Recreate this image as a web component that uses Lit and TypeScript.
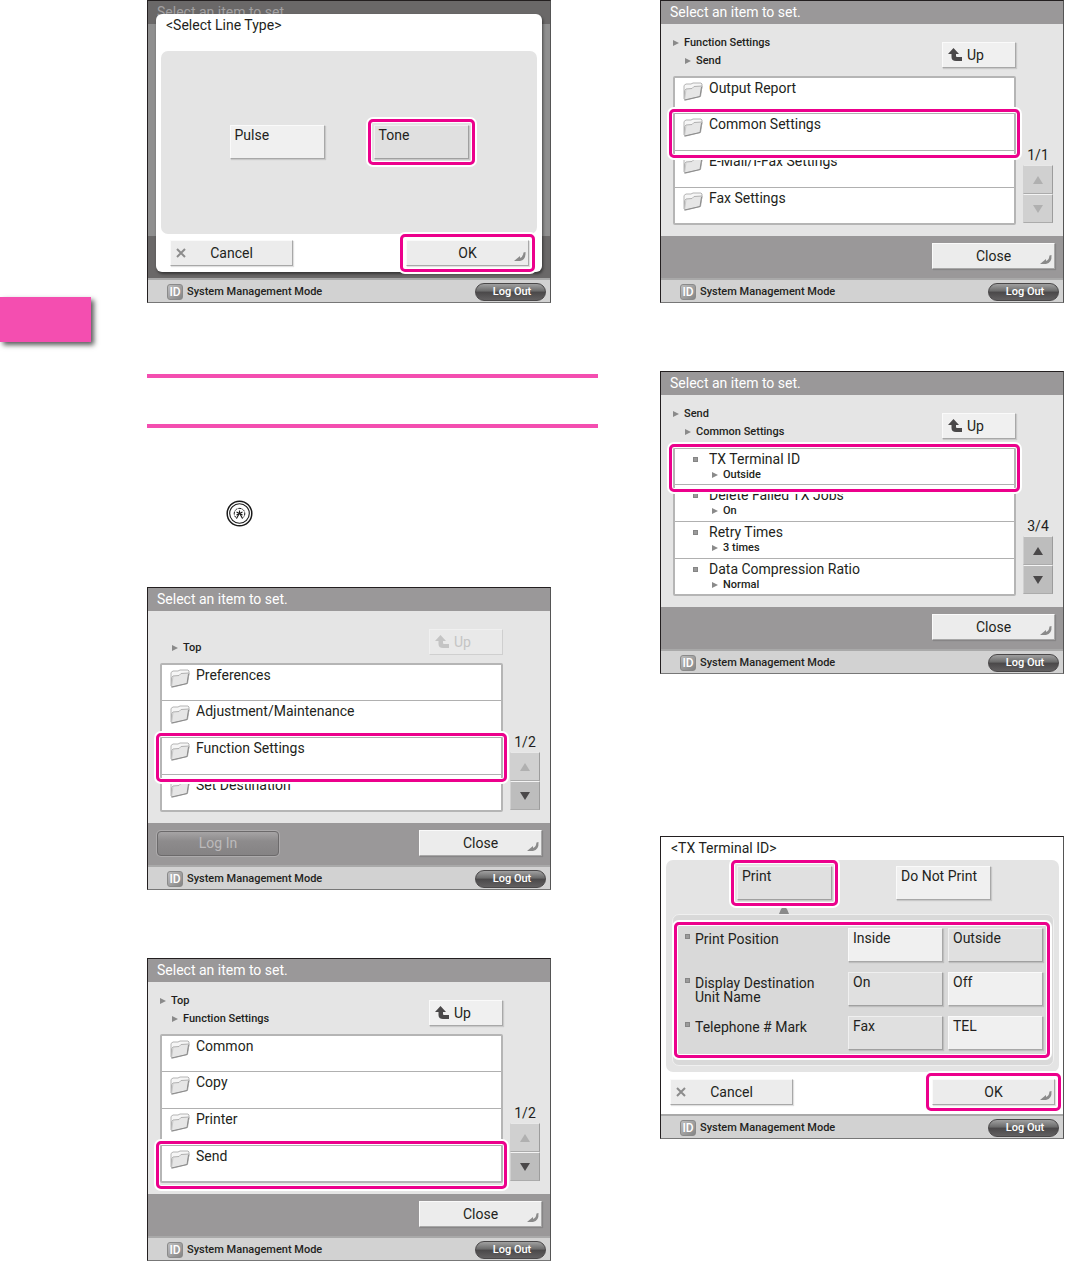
import { LitElement, html, css, svg, nothing, TemplateResult } from "lit";
import { customElement } from "lit/decorators.js";
import { classMap } from "lit/directives/class-map.js";

interface Row {
  label: string;
  value?: string;
  marked?: boolean;
}

interface ListScreen {
  crumbs: string[];
  rows: Row[];
  page: string;
  up: boolean;
  prev: boolean;
  next: boolean;
  login?: boolean;
}

const TOP: ListScreen = {
  crumbs: ["", "Top"],
  rows: [
    { label: "Preferences" },
    { label: "Adjustment/Maintenance" },
    { label: "Function Settings", marked: true },
    { label: "Set Destination" },
  ],
  page: "1/2",
  up: false,
  prev: false,
  next: true,
  login: true,
};

const FUNCTIONS: ListScreen = {
  crumbs: ["Top", "Function Settings"],
  rows: [{ label: "Common" }, { label: "Copy" }, { label: "Printer" }, { label: "Send", marked: true }],
  page: "1/2",
  up: true,
  prev: false,
  next: true,
};

const SEND: ListScreen = {
  crumbs: ["Function Settings", "Send"],
  rows: [
    { label: "Output Report" },
    { label: "Common Settings", marked: true },
    { label: "E-Mail/I-Fax Settings" },
    { label: "Fax Settings" },
  ],
  page: "1/1",
  up: true,
  prev: false,
  next: false,
};

const COMMON: ListScreen = {
  crumbs: ["Send", "Common Settings"],
  rows: [
    { label: "TX Terminal ID", value: "Outside", marked: true },
    { label: "Delete Failed TX Jobs", value: "On" },
    { label: "Retry Times", value: "3 times" },
    { label: "Data Compression Ratio", value: "Normal" },
  ],
  page: "3/4",
  up: true,
  prev: true,
  next: true,
};

const OPTIONS = [
  { label: "Print Position", choices: ["Inside", "Outside"], chosen: 1 },
  { label: "Display Destination Unit Name", choices: ["On", "Off"], chosen: 0 },
  { label: "Telephone # Mark", choices: ["Fax", "TEL"], chosen: 0 },
];

const arrow = html`<svg class="arrow" viewBox="0 0 6 6" aria-hidden="true"><path d="M0 0 6 3 0 6Z" fill="#8a8a8a" /></svg>`;

const folder = html`<svg class="folder" viewBox="0 0 20 19" aria-hidden="true">
  <path d="M1 17V3.500L3 2H8L10 1H18L19 2V5L17 14Z" fill="#f6f6f6" stroke="#b4b4b4" stroke-linejoin="round" />
  <path d="M1.500 18V8.500L3 7 9 6.500 11 4.500 19 4 17.500 14.500 3 18Z" fill="#e6e6e6" stroke="#b0b0b0" stroke-linejoin="round" />
  <path d="M1.500 18 3 7.500" fill="none" stroke="#c8c8c8" />
  <path d="M1.500 18 17 14.500 18.500 5" fill="none" stroke="#8c8c8c" stroke-linejoin="round" />
</svg>`;

const upIcon = html`<svg class="up-icon" viewBox="0 0 14 14" aria-hidden="true">
  <path d="M5.500 0 11 6H8V8Q8 9 9 9H14V13H8Q3.500 13 3.500 9V6H0Z" fill="currentColor" />
</svg>`;

const enterIcon = html`<svg class="enter" viewBox="0 0 12 10" aria-hidden="true">
  <path d="M0 9 6 4V6Q9 5 9.500 0.500L11.500 0Q12 8 6 9H0Z" fill="#8a8a8a" />
</svg>`;

const crossIcon = html`<svg class="cross" viewBox="0 0 10 10" aria-hidden="true">
  <path d="M1 1 9 9M9 1 1 9" stroke="#8c8c8c" stroke-width="2" />
</svg>`;

const triangle = (down: boolean) => html`<svg class="tri" viewBox="0 0 10 8" aria-hidden="true">
  ${down ? svg`<path d="M0 0H10L5 8Z" fill="currentColor" />` : svg`<path d="M0 8H10L5 0Z" fill="currentColor" />`}
</svg>`;

const settingsKey = html`<svg class="key" viewBox="0 0 27 27" role="img" aria-label="Settings/Registration">
  <g fill="none" stroke="#1a1a1a">
    <circle cx="13.500" cy="13.500" r="12.300" stroke-width="1.500" />
    <circle cx="13.500" cy="13.500" r="9.800" stroke-width="1.100" />
    <path d="M10.500 18A5.300 5.300 0 1 1 16.500 18" stroke-width="1" stroke-dasharray="3 1" />
    <path d="M10.500 12 16.500 15M16.500 12 10.500 15M13.500 10.500V14M13 14 10.500 18.500M14 14 16.500 18.500" stroke-width="1.100" />
  </g>
</svg>`;

@customElement("app-root")
export class AppRoot extends LitElement {
  static styles = css`
    :host {
      display: block;
      background: #fff;
      color: #231f20;
      font: 14px/16px Roboto, "Liberation Sans", sans-serif;
    }
    * {
      box-sizing: border-box;
    }
    button {
      font: inherit;
      color: inherit;
      padding: 0;
      margin: 0;
      border: 0;
      background: none;
    }
    svg {
      display: block;
      flex: none;
    }
    .page {
      display: grid;
      grid-template-columns: 147px minmax(0, 451fr) 62px minmax(0, 404fr);
      padding-right: 1px;
    }
    .tab {
      width: 91px;
      height: 45px;
      margin-top: 297px;
      background: #f44eb0;
      box-shadow: 3px 3px 5px rgba(0, 0, 0, 0.65);
    }
    .main {
      grid-column: 2;
    }
    .side {
      grid-column: 4;
    }
    .column {
      display: flex;
      flex-direction: column;
    }
    .gap {
      margin-top: 68px;
    }
    .far {
      margin-top: 162px;
    }
    .heading {
      height: 54px;
      margin-top: 71px;
      border: solid #f44eb0;
      border-width: 4px 0;
    }
    .step {
      padding: 72px 0 60px 79px;
    }
    .key {
      width: 27px;
      height: 27px;
    }

    .screen {
      position: relative;
      display: flex;
      flex-direction: column;
      width: 100%;
      max-width: 404px;
      min-height: 303px;
      border: 1px solid #231f20;
      border-right-color: #555;
      border-bottom-color: #777;
      background: #e5e5e5;
    }
    .title {
      height: 23px;
      padding: 3px 9px;
      background: #9a9899;
      color: #fff;
    }
    .body {
      flex: 1;
      display: grid;
      grid-template-columns: minmax(0, 1fr) 30px;
      column-gap: 7px;
      padding: 0 10px 11px 12px;
    }
    .head {
      display: flex;
      justify-content: space-between;
      height: 52px;
    }
    .crumbs {
      margin: 0;
      padding: 10px 0 0;
      list-style: none;
    }
    .crumb {
      display: flex;
      align-items: center;
      gap: 5px;
      height: 18px;
    }
    .crumb + .crumb {
      padding-left: 12px;
    }
    .small {
      font-size: 11px;
      line-height: 16px;
      font-weight: 500;
    }
    .arrow {
      width: 6px;
      height: 6px;
    }
    .raised {
      background: #f0f0f0;
      border: 1px solid;
      border-color: #fafafa #a8a8a8 #a8a8a8 #fafafa;
      box-shadow: 1px 1px 1px rgba(0, 0, 0, 0.12);
    }
    .up {
      display: flex;
      align-items: center;
      gap: 5px;
      width: 74px;
      height: 26px;
      margin-top: 18px;
      padding-left: 5px;
    }
    .up-icon {
      width: 14px;
      height: 14px;
      color: #4a4849;
    }
    .up:disabled {
      color: #c4c4c4;
      background: #e9e9e9;
      border-color: #f0f0f0 #cfcfcf #cfcfcf #f0f0f0;
      box-shadow: none;
    }
    .up:disabled .up-icon {
      color: #c4c4c4;
    }
    .list {
      grid-column: 1;
      margin: 0;
      padding: 0;
      list-style: none;
      border: 2px solid #b5b5b5;
      border-radius: 2px;
      background: #fff;
    }
    .item {
      position: relative;
      height: 37px;
      border-bottom: 1px solid #b0b0b0;
    }
    .item:first-child {
      height: 36px;
    }
    .item:last-child {
      height: 35px;
      border-bottom: 0;
    }
    .entry {
      display: flex;
      align-items: flex-start;
      gap: 6px;
      width: 100%;
      height: 100%;
      padding: 2px 8px;
      text-align: left;
    }
    .folder {
      width: 20px;
      height: 19px;
      margin-top: 2px;
    }
    .bullet {
      flex: none;
      width: 5px;
      height: 5px;
      margin-top: 6px;
      background: #9a9a9a;
      border: 1px solid #858585;
    }
    .entry .bullet {
      margin-left: 10px;
      margin-right: 5px;
    }
    .value {
      display: flex;
      align-items: center;
      gap: 5px;
      padding-left: 3px;
    }
    .mark {
      position: absolute;
      z-index: 2;
      border: 3px solid #ec008c;
      border-radius: 5px;
      box-shadow: 0 0 0 2px #fff, inset 0 0 0 1px #fff;
      pointer-events: none;
    }
    .mark-row {
      inset: -5px -6px -8px;
    }
    .mark-button {
      inset: -7px;
    }
    .pager {
      align-self: end;
      display: flex;
      flex-direction: column;
      align-items: center;
      margin-bottom: 2px;
    }
    .page-number {
      margin-bottom: 2px;
    }
    .turn {
      display: grid;
      place-items: center;
      width: 30px;
      height: 29px;
      background: #bdbdbd;
      border: 1px solid;
      border-color: #e8e8e8 #9c9c9c #ababab #d0d0d0;
      color: #4a4849;
    }
    .turn + .turn {
      border-top-color: #f4f4f4;
    }
    .turn:disabled {
      background: #d0d0d0;
      color: #b0b0b0;
    }
    .tri {
      width: 10px;
      height: 8px;
    }

    .actions {
      display: flex;
      align-items: center;
      height: 42px;
      padding: 0 8px 2px 9px;
      background: #9a9899;
    }
    .command {
      position: relative;
      display: flex;
      align-items: center;
      justify-content: center;
      width: 123px;
      height: 26px;
    }
    .command.raised {
      background: #ececec;
    }
    .last {
      margin-left: auto;
    }
    .enter {
      position: absolute;
      right: 2px;
      bottom: 3px;
      width: 12px;
      height: 10px;
    }
    .cross {
      position: absolute;
      left: 5px;
      width: 10px;
      height: 10px;
    }
    .login {
      width: 122px;
      height: 25px;
      border: 1px solid #6c6a6b;
      border-radius: 4px;
      background: linear-gradient(#a6a4a5, #8d8b8c 40%, #858384);
      color: #bcbabb;
      box-shadow: 0 0 0 1px #adabac;
    }
    .status {
      display: flex;
      align-items: center;
      gap: 4px;
      height: 24px;
      padding: 2px 4px 0 19px;
      border-top: 2px solid #a9a9a9;
      background: #d2d2d2;
    }
    .id {
      width: 16px;
      height: 16px;
      border: 1px solid #8a8a8a;
      border-radius: 3px;
      background: linear-gradient(135deg, #bdbdbd, #858585);
      color: #fff;
      font-size: 12px;
      line-height: 14px;
      font-weight: 500;
      text-align: center;
    }
    .logout {
      margin-left: auto;
      width: 71px;
      height: 18px;
      padding-left: 3px;
      border: 1px solid #4a4849;
      border-radius: 10px;
      background: linear-gradient(#a0a0a0, #6a6a6a 45%, #4a4849 50%, #626061);
      color: #fff;
    }

    .dimmed {
      background: #8f8f8f;
    }
    .dimmed .title,
    .dimmed .actions {
      background: #6a6868;
    }
    .dimmed .title {
      color: #a3a1a2;
    }
    .dialog {
      position: absolute;
      z-index: 1;
      inset: 13px 8px 30px;
      display: flex;
      flex-direction: column;
      padding: 3px 5px 6px;
      border-radius: 6px;
      background: #fff;
      box-shadow: 1px 2px 3px rgba(0, 0, 0, 0.5);
    }
    .dialog-title {
      padding: 0 5px;
    }
    .panel {
      border-radius: 7px;
      background: #e4e4e4;
    }
    .line-types {
      flex: 1;
      display: flex;
      justify-content: center;
      align-items: center;
      gap: 49px;
      margin-top: 18px;
      padding-bottom: 2px;
    }
    .choice {
      position: relative;
      display: flex;
      width: 95px;
      height: 34px;
      padding: 1px 4px;
      text-align: left;
    }
    .choice.on {
      background: #e0e0e0;
      border-color: #f0f0f0 #a0a0a0 #a0a0a0 #f0f0f0;
    }
    .buttons {
      display: flex;
      justify-content: space-between;
      padding: 6px 8px 0 9px;
    }

    .plain {
      background: #fff;
    }
    .sheet {
      flex: 1;
      padding: 3px 4px 0 5px;
    }
    .terminal {
      margin-top: 4px;
      padding: 6px 5px 6px 6px;
    }
    .modes {
      display: flex;
      gap: 64px;
      padding-left: 65px;
    }
    .pointer {
      width: 10px;
      height: 7px;
      margin: 7px 0 0 107px;
    }
    .options {
      position: relative;
      display: grid;
      gap: 10px;
      padding: 13px 10px 15px 12px;
      border: 1px solid #f0f0f0;
      border-radius: 7px;
      background: #d9d9d9;
    }
    .mark-options {
      inset: 7px 3px 7px 1px;
    }
    .option {
      display: grid;
      grid-template-columns: 5px minmax(0, 1fr) 95px 95px;
      column-gap: 5px;
    }
    .option-label {
      max-width: 130px;
      padding-top: 4px;
      line-height: 14px;
    }
    .sheet-buttons {
      display: flex;
      justify-content: space-between;
      padding: 7px 4px 8px;
    }
  `;

  private header(text = "Select an item to set.") {
    return html`<header class="title">${text}</header>`;
  }

  private status() {
    return html`<footer class="status">
      <span class="id">ID</span>
      <span class="small">System Management Mode</span>
      <button class="logout small">Log Out</button>
    </footer>`;
  }

  private command(label: string, icon: TemplateResult, last: boolean, marked = false) {
    return html`<button class=${classMap({ command: true, raised: true, last })}>
      ${label}${icon}${marked ? html`<span class="mark mark-button"></span>` : nothing}
    </button>`;
  }

  private choice(label: string, on: boolean, marked = false) {
    return html`<button class=${classMap({ choice: true, raised: true, on })} aria-pressed=${on}>
      ${label}${marked ? html`<span class="mark mark-button"></span>` : nothing}
    </button>`;
  }

  private row(row: Row) {
    return html`<li class="item">
      <button class="entry">
        ${row.value ? html`<span class="bullet"></span>` : folder}
        <span>
          ${row.label}
          ${row.value ? html`<span class="value small">${arrow}${row.value}</span>` : nothing}
        </span>
      </button>
      ${row.marked ? html`<span class="mark mark-row"></span>` : nothing}
    </li>`;
  }

  private list(s: ListScreen, place = "") {
    return html`<section class="screen ${place}">
      ${this.header()}
      <div class="body">
        <div class="head">
          <ul class="crumbs small">
            ${s.crumbs.map((c) => html`<li class="crumb">${c ? html`${arrow}${c}` : nothing}</li>`)}
          </ul>
          <button class="up raised" ?disabled=${!s.up}>${upIcon}Up</button>
        </div>
        <ul class="list">
          ${s.rows.map((r) => this.row(r))}
        </ul>
        <div class="pager">
          <span class="page-number">${s.page}</span>
          <button class="turn" aria-label="Previous page" ?disabled=${!s.prev}>${triangle(false)}</button>
          <button class="turn" aria-label="Next page" ?disabled=${!s.next}>${triangle(true)}</button>
        </div>
      </div>
      <div class="actions">
        ${s.login ? html`<button class="login" disabled>Log In</button>` : nothing}
        ${this.command("Close", enterIcon, true)}
      </div>
      ${this.status()}
    </section>`;
  }

  private lineType() {
    return html`<section class="screen dimmed">
      ${this.header()}
      <div class="body"></div>
      <div class="actions"></div>
      ${this.status()}
      <div class="dialog" role="dialog" aria-label="Select Line Type">
        <div class="dialog-title">&lt;Select Line Type&gt;</div>
        <div class="panel line-types">${this.choice("Pulse", false)}${this.choice("Tone", true, true)}</div>
        <div class="buttons">
          ${this.command("Cancel", crossIcon, false)}${this.command("OK", enterIcon, true, true)}
        </div>
      </div>
    </section>`;
  }

  private terminalId() {
    return html`<section class="screen plain far">
      <div class="sheet">
        <div class="dialog-title">&lt;TX Terminal ID&gt;</div>
        <div class="panel terminal">
          <div class="modes">${this.choice("Print", true, true)}${this.choice("Do Not Print", false)}</div>
          <svg class="pointer" viewBox="0 0 10 7" aria-hidden="true">
            <path d="M0 7 2 2Q5 -2 8 2L10 7Z" fill="#8a8a8a" />
          </svg>
          <div class="options">
            ${OPTIONS.map(
              (o) => html`<div class="option" role="group" aria-label=${o.label}>
                <span class="bullet"></span>
                <span class="option-label">${o.label}</span>
                ${o.choices.map((c, i) => this.choice(c, i === o.chosen))}
              </div>`
            )}
            <span class="mark mark-options"></span>
          </div>
        </div>
        <div class="sheet-buttons">
          ${this.command("Cancel", crossIcon, false)}${this.command("OK", enterIcon, true, true)}
        </div>
      </div>
      ${this.status()}
    </section>`;
  }

  render() {
    return html`<main class="page">
      <div class="tab"></div>
      <div class="main column">
        ${this.lineType()}
        <div class="heading"></div>
        <div class="step">${settingsKey}</div>
        ${this.list(TOP)} ${this.list(FUNCTIONS, "gap")}
      </div>
      <div class="side column">${this.list(SEND)} ${this.list(COMMON, "gap")} ${this.terminalId()}</div>
    </main>`;
  }
}
